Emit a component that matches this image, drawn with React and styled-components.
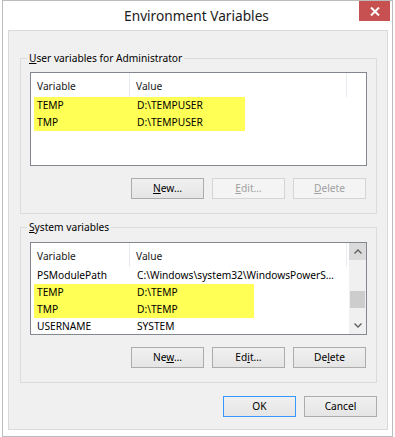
import React from 'react';
import styled, { createGlobalStyle } from 'styled-components';

const Global = createGlobalStyle`
  html, body { margin: 0; padding: 0; background: #ffffff; }
  body {
    font-family: "Noto Sans", "Open Sans", sans-serif;
    font-size: 10.2px;
    color: #000;
  }
  * { box-sizing: border-box; }
`;

const Window = styled.div`
  width: 391px;
  height: 437px;
  margin-left: 2px;
  border: 1px solid #bcbcbc;
  background: #ffffff;
  display: flex;
  flex-direction: column;
`;

const TitleBar = styled.div`
  height: 29px;
  display: grid;
  grid-template-columns: 1fr auto 1fr;
  margin-right: 2px;
`;

const Title = styled.div`
  grid-column: 2;
  font-size: 13.7px;
  line-height: 29px;
  color: #1b1b1b;
  white-space: nowrap;
`;

const Close = styled.div`
  grid-column: 3;
  justify-self: end;
  align-self: start;
  width: 31px;
  height: 20px;
  background: #c75050;
  display: flex;
  align-items: center;
  justify-content: center;
`;

const Client = styled.div`
  flex: 1;
  margin: 0 4px 6px 5px;
  border: 1px solid #dadada;
  background: #f0f0f0;
  padding: 20px 10px 12px 11px;
  display: flex;
  flex-direction: column;
`;

const Group = styled.fieldset`
  margin: 0 0 ${p => p.$gap || 0}px 0;
  padding: 0;
  border: 1px solid #dcdcdc;
  min-width: 0;
`;

const Legend = styled.legend`
  margin-left: 6px;
  padding: 0 2px;
  line-height: 15px;
  font-size: 10.2px;
`;

const GroupBody = styled.div`
  padding: ${p => p.$top}px 9px 14px 9px;
`;

const Key = styled.span`
  text-decoration: underline;
  text-underline-offset: 1px;
`;

const ListBox = styled.div`
  height: ${p => p.$h}px;
  border: 1px solid #828790;
  background: #ffffff;
  display: flex;
  overflow: hidden;
`;

const ListContent = styled.div`
  flex: 1;
  min-width: 0;
  display: flex;
  flex-direction: column;
`;

const Header = styled.div`
  height: 24px;
  display: flex;
  flex: none;
`;

const HeaderCell = styled.div`
  width: ${p => p.$w}px;
  padding: 2px 0 0 6px;
  line-height: 22px;
  border-right: 1px solid #e8ecf2;
  color: #1a1a1a;
`;

const Row = styled.div`
  height: 17px;
  flex: none;
  display: flex;
  padding-left: 3px;
`;

const RowBand = styled.div`
  display: flex;
  width: ${p => p.$w}px;
  background: ${p => (p.$hl ? '#ffff55' : 'transparent')};
  white-space: nowrap;
  line-height: 17px;
`;

const NameCell = styled.div`
  width: 96px;
  flex: none;
  padding-left: 3px;
`;

const ValueCell = styled.div`
  padding-left: 7px;
  white-space: nowrap;
`;

const ScrollBar = styled.div`
  width: 17px;
  flex: none;
  background: #f0f0f0;
  display: flex;
  flex-direction: column;
`;

const ScrollArrow = styled.div`
  height: 17px;
  flex: none;
  background: ${p => (p.$active ? '#dadada' : 'transparent')};
  display: flex;
  align-items: center;
  justify-content: center;
`;

const Track = styled.div`
  flex: 1;
  padding-top: ${p => p.$offset}px;
`;

const Thumb = styled.div`
  height: 17px;
  margin: 0 1px;
  background: #cdcdcd;
`;

const ButtonRow = styled.div`
  display: flex;
  justify-content: flex-end;
  gap: 8px;
  margin-top: ${p => p.$top || 0}px;
  padding-right: ${p => p.$right || 0}px;
`;

const Button = styled.button`
  width: 73px;
  height: 21px;
  padding: 0;
  margin: 0;
  font-family: inherit;
  font-size: 10.2px;
  line-height: 19px;
  color: ${p => (p.disabled ? '#a0a0a0' : '#000')};
  background: ${p => (p.disabled ? '#f4f4f4' : 'linear-gradient(#f0f0f0, #e5e5e5)')};
  border: 1px solid ${p => (p.$primary ? '#3399ff' : p.disabled ? '#d5d5d5' : '#acacac')};
  border-radius: 0;
`;

const Footer = styled(ButtonRow)`
  margin-top: 13px;
`;

const Chevron = ({ up }) => (
  <svg width="8" height="5" viewBox="0 0 8 5">
    <path
      d={up ? 'M0.5 4.5 L4 1 L7.5 4.5' : 'M0.5 0.5 L4 4 L7.5 0.5'}
      fill="none"
      stroke="#606060"
      strokeWidth="1.4"
    />
  </svg>
);

const userVars = [
  { name: 'TEMP', value: 'D:\\TEMPUSER', hl: true },
  { name: 'TMP', value: 'D:\\TEMPUSER', hl: true },
];

const sysVars = [
  { name: 'PSModulePath', value: 'C:\\Windows\\system32\\WindowsPowerS…', hl: false },
  { name: 'TEMP', value: 'D:\\TEMP', hl: true },
  { name: 'TMP', value: 'D:\\TEMP', hl: true },
  { name: 'USERNAME', value: 'SYSTEM', hl: false },
];

function VarList({ items, height, band, scroll }) {
  return (
    <ListBox $h={height}>
      <ListContent>
        <Header>
          <HeaderCell $w={99}>Variable</HeaderCell>
          <HeaderCell $w={217}>Value</HeaderCell>
        </Header>
        {items.map((v, i) => (
          <Row key={i}>
            <RowBand $hl={v.hl} $w={v.hl ? band : 320}>
              <NameCell>{v.name}</NameCell>
              <ValueCell>{v.value}</ValueCell>
            </RowBand>
          </Row>
        ))}
      </ListContent>
      {scroll && (
        <ScrollBar>
          <ScrollArrow $active>
            <Chevron up />
          </ScrollArrow>
          <Track $offset={31}>
            <Thumb />
          </Track>
          <ScrollArrow>
            <Chevron />
          </ScrollArrow>
        </ScrollBar>
      )}
    </ListBox>
  );
}

export default function App() {
  return (
    <>
      <Global />
      <Window>
        <TitleBar>
          <Title>Environment Variables</Title>
          <Close>
            <svg width="10" height="9" viewBox="0 0 10 9">
              <path d="M1 0.5 L9 8.5 M9 0.5 L1 8.5" stroke="#ffffff" strokeWidth="2" />
            </svg>
          </Close>
        </TitleBar>
        <Client>
          <Group $gap={6}>
            <Legend>
              <Key>U</Key>ser variables for Administrator
            </Legend>
            <GroupBody $top={6}>
              <VarList items={userVars} height={94} band={211} />
              <ButtonRow $top={12} $right={1}>
                <Button>
                  <Key>N</Key>ew…
                </Button>
                <Button disabled>
                  <Key>E</Key>dit…
                </Button>
                <Button disabled>
                  <Key>D</Key>elete
                </Button>
              </ButtonRow>
            </GroupBody>
          </Group>
          <Group>
            <Legend>
              <Key>S</Key>ystem variables
            </Legend>
            <GroupBody $top={7}>
              <VarList items={sysVars} height={93} band={220} scroll />
              <ButtonRow $top={12} $right={1}>
                <Button>
                  Ne<Key>w</Key>…
                </Button>
                <Button>
                  Ed<Key>i</Key>t…
                </Button>
                <Button>
                  De<Key>l</Key>ete
                </Button>
              </ButtonRow>
            </GroupBody>
          </Group>
          <Footer>
            <Button $primary>OK</Button>
            <Button>Cancel</Button>
          </Footer>
        </Client>
      </Window>
    </>
  );
}
